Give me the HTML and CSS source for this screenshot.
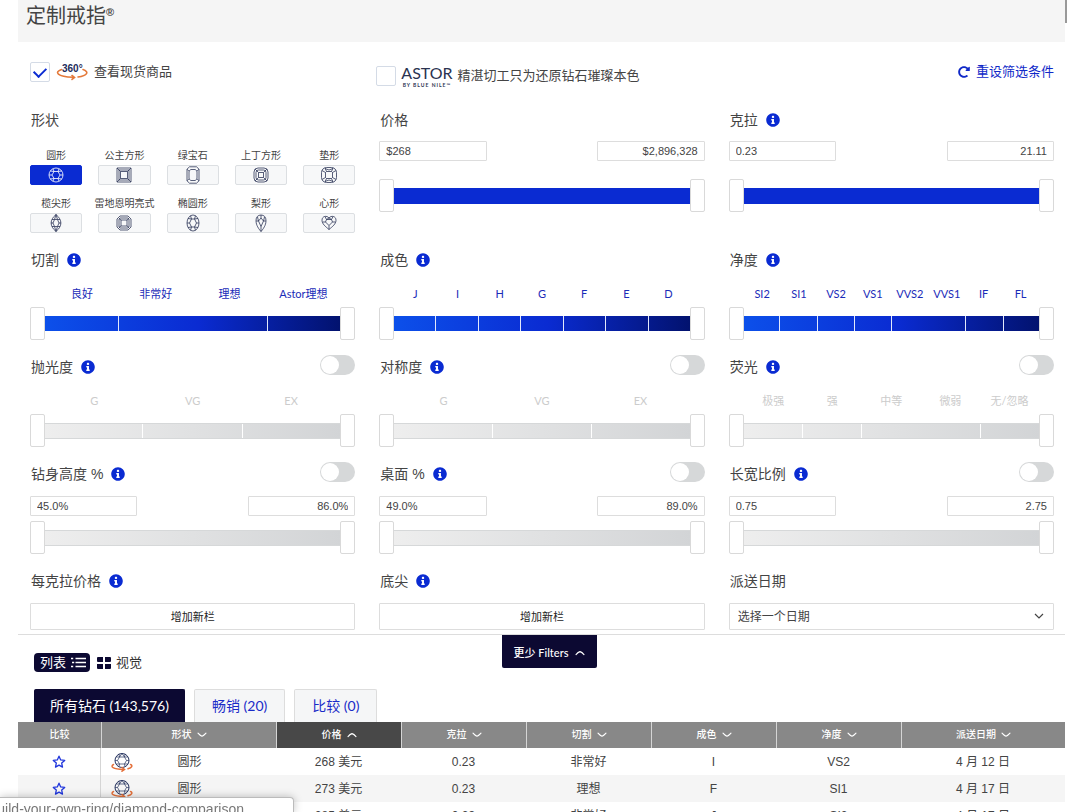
FILE: index.html
```html
<!DOCTYPE html>
<html lang="zh-CN">
<head>
<meta charset="utf-8">
<meta name="viewport" content="width=device-width, initial-scale=1">
<title>定制戒指</title>
<link rel="stylesheet" href="styles.css">
</head>
<body>
<svg class="sprite" aria-hidden="true">
  <symbol id="info" viewBox="0 0 512 512"><path fill="currentColor" d="M256 8C119.043 8 8 119.083 8 256c0 136.997 111.043 248 248 248s248-111.003 248-248C504 119.083 392.957 8 256 8zm0 90c25 0 44 19 44 44s-19 44-44 44-44-19-44-44 19-44 44-44zm64 290c0 6.627-5.373 12-12 12h-104c-6.627 0-12-5.373-12-12v-26c0-6.627 5.373-12 12-12h16v-78h-16c-6.627 0-12-5.373-12-12v-26c0-6.627 5.373-12 12-12h76c6.627 0 12 5.373 12 12v116h16c6.627 0 12 5.373 12 12v26z"/></symbol>
  <symbol id="redo" viewBox="0 0 512 512"><path fill="currentColor" d="M256.455 8c66.269.119 126.437 26.233 170.859 68.685l35.715-35.715C478.149 25.851 504 36.559 504 57.941V192c0 13.255-10.745 24-24 24H345.941c-21.382 0-32.09-25.851-16.971-40.971l41.75-41.75c-30.864-28.899-70.801-44.907-113.23-45.273-92.398-.798-170.283 73.977-169.484 169.442C88.764 348.009 162.184 424 256 424c41.127 0 79.997-14.678 110.629-41.556 4.743-4.161 11.906-3.908 16.368.553l39.662 39.662c4.872 4.872 4.631 12.815-.482 17.433C378.202 479.813 319.926 504 256 504 119.034 504 8.001 392.967 8 256.002 7.999 119.193 119.646 7.755 256.455 8z"/></symbol>
  <symbol id="down" viewBox="0 0 10 6"><path fill="none" stroke="currentColor" stroke-width="1.1" stroke-linecap="round" d="M1 1.2Q3 3.6 5 4.2Q7 3.6 9 1.2"/></symbol>
  <symbol id="up" viewBox="0 0 10 6"><path fill="none" stroke="currentColor" stroke-width="1.1" stroke-linecap="round" d="M1 4.6Q3 2.2 5 1.6Q7 2.2 9 4.6"/></symbol>
  <symbol id="star" viewBox="0 0 14 14"><path fill="none" stroke="currentColor" stroke-width="1.3" stroke-linejoin="round" d="M7 1.2l1.7 3.7 4 .5-3 2.7.8 4L7 10.1l-3.500 2 .8-4-3-2.700 4-.5z"/></symbol>
  <symbol id="spin" viewBox="0 0 22 20">
    <g fill="none" stroke="#26335f" stroke-width="1"><circle cx="11" cy="8.500" r="7"/><path stroke-width=".7" d="M8.500 5h5l2 3.500-2 3.500h-5l-2-3.500zM8.500 5l-.5-3.200M13.500 5l.5-3.200M15.500 8.500h2.500M6.500 8.500H4M8.500 12l-.5 3M13.500 12l.5 3M8.500 5L5 5M13.500 5h3.500M8.500 12H5M13.500 12h3.500M8.500 5L11 1.500 13.500 5"/></g>
    <g fill="none" stroke="#e4703a" stroke-width="1.500" stroke-linecap="round"><path d="M2.500 12.500C-1 14.500 1.500 17.400 12.500 17.400M19.500 12.500c2.500 1 1.500 3-2.500 4.200"/><path d="M11 15.500l2.500 1.900-2.500 1.800"/></g>
  </symbol>
</svg>

<header class="masthead"><h1>定制戒指<sup>®</sup></h1></header>
<span class="scroll-thumb"></span>

<main>
  <form class="filters">
    <div class="options">
      <label class="option">
        <input class="tick" type="checkbox" checked>
        <svg class="spin-logo" width="32" height="18" viewBox="0 0 32 18" aria-hidden="true">
          <g fill="none" stroke="#e4793a" stroke-width="1.600" stroke-linecap="round"><path d="M5.500 6.500C-2 9 1 13.500 17 14.300M27 6.500c6.500 2.200 4.500 6.200-5 7.500"/><path d="M16 12.500l2.500 1.900-2.500 2"/></g>
          <text class="spin-text" x="6" y="9">360°</text>
        </svg>
        <span>查看现货商品</span>
      </label>
      <label class="option option-astor">
        <input class="tick" type="checkbox">
        <span class="astor"><b>ASTOR</b><small>BY BLUE NILE™</small></span>
        <span>精湛切工只为还原钻石璀璨本色</span>
      </label>
      <button class="reset" type="button"><svg width="12" height="12"><use href="#redo"/></svg>重设筛选条件</button>
    </div>

    <div class="grid">
      <section class="filter">
        <h2>形状</h2>
        <div class="shapes">
          <button type="button" class="shape active" aria-pressed="true"><span>圆形</span><i><svg viewBox="0 0 18 18"><circle cx="9" cy="9" r="7"/><path d="M7 5.500h4L13 9l-2 3.500H7L5 9zM7 5.500L6 2.700M11 5.500l1-2.800M13 9h3M5 9H2M7 12.500l-1 2.800M11 12.500l1 2.800M7 5.500L3.200 5M11 5.500l3.800-.5M7 12.500L3.200 13M11 12.500l3.800.5"/></svg></i></button>
          <button type="button" class="shape"><span>公主方形</span><i><svg viewBox="0 0 18 18"><path d="M2 2h14v14H2zM5.500 5.500h7v7h-7zM2 2l3.500 3.500M16 2l-3.500 3.500M2 16l3.500-3.500M16 16l-3.500-3.500M4 4h10v10H4z"/></svg></i></button>
          <button type="button" class="shape"><span>绿宝石</span><i><svg viewBox="0 0 18 18"><path d="M5.500.8h7L15 3.200v11.600l-2.500 2.400h-7L3 14.800V3.200zM6.800 3.500h4.400L13 5.200v7.600l-1.800 1.700H6.800L5 12.800V5.200zM3 3.200l2 2M15 3.200l-2 2M3 14.800l2-2M15 14.800l-2-2"/></svg></i></button>
          <button type="button" class="shape"><span>上丁方形</span><i><svg viewBox="0 0 18 18"><rect x="2" y="2" width="14" height="14" rx="4"/><rect x="4" y="4" width="10" height="10" rx="2.500"/><path d="M6.500 6.500h5v5h-5zM3 3l3.500 3.500M15 3l-3.500 3.500M3 15l3.500-3.500M15 15l-3.500-3.500"/></svg></i></button>
          <button type="button" class="shape"><span>垫形</span><i><svg viewBox="0 0 18 18"><rect x="1.500" y="1.500" width="15" height="15" rx="5"/><path d="M6.500 5.500h5l1 1v5l-1 1h-5l-1-1v-5zM6.500 5.500L5 2M11.500 5.500L13 2M12.500 6.500L16 4.500M12.500 11.500l3.500 2M11.500 12.500l1.500 3.500M6.500 12.500L5 16M5.500 11.500L2 13.500M5.500 6.500L2 4.500M5 2.500Q9 5.500 13 2.500M5 15.500Q9 12.500 13 15.500"/></svg></i></button>
          <button type="button" class="shape"><span>榄尖形</span><i><svg viewBox="0 0 18 18"><path d="M9 .5C15.500 6 15.500 12 9 17.500 2.500 12 2.500 6 9 .5zM7.500 5.500h3L12 9l-1.500 3.500h-3L6 9zM9 .5L7.500 5.500M9 .5l1.500 5M7.500 12.500l1.500 5 1.500-5M12 9h2M6 9H4M7.500 5.500L5 5.500M10.500 5.500h2.500M7.500 12.500H5M10.500 12.500h2.500"/></svg></i></button>
          <button type="button" class="shape"><span>雷地恩明亮式</span><i><svg viewBox="0 0 18 18"><path d="M5 2h8l3 3v8l-3 3H5l-3-3V5zM5 4h8l1 1v8l-1 1H5l-1-1V5zM6 6h6v6H6zM4 4.500L6 6M14 4.500L12 6M4 13.500L6 12M14 13.500L12 12"/></svg></i></button>
          <button type="button" class="shape"><span>椭圆形</span><i><svg viewBox="0 0 18 18"><ellipse cx="9" cy="9" rx="6" ry="8"/><path d="M7.500 5h3L12.500 9l-2 4h-3l-2-4zM7.500 5L6.500 1.800M10.500 5l1-3.200M12.500 9H15M5.500 9H3M7.500 13l-1 3.200M10.500 13l1 3.200M7.500 5L4 4.500M10.500 5l3.500-.5M7.500 13L4 13.500M10.500 13l3.500.5"/></svg></i></button>
          <button type="button" class="shape"><span>梨形</span><i><svg viewBox="0 0 18 18"><path d="M9 17.500C5 13 4 9.500 4 6.500 4 3 6 1 9 1s5 2 5 5.500c0 3-1 6.500-5 11zM9 4l2.500 3L9 12.500 6.500 7zM9 12.500v5M9 1v3M6.500 7H4M11.500 7H14M6.500 7l-1-4M11.500 7l1-4"/></svg></i></button>
          <button type="button" class="shape"><span>心形</span><i><svg viewBox="0 0 18 18"><path d="M9 15.500C5.500 12.500 2 10 2 6.200 2 2 6.800 1.200 9 4c2.200-2.800 7-2 7 2.200 0 3.800-3.500 6.300-7 9.300zM6.500 5.500h5l1 2.500L9 11.500 5.500 8zM6.500 5.500L5 2.600M6.500 5.500L9 4l2.500 1.500L13 2.600M5.500 8H2.500M12.500 8h3M9 11.500v4"/></svg></i></button>
        </div>
      </section>

      <section class="filter">
        <h2>价格</h2>
        <div class="pair pair-tall"><input type="text" aria-label="最低价格" value="$268"><input type="text" aria-label="最高价格" value="$2,896,328"></div>
        <div class="slider"><div class="track solid"></div><input type="range" aria-label="最低价格" value="0"><input type="range" aria-label="最高价格" value="100"></div>
      </section>

      <section class="filter">
        <h2>克拉<svg class="info"><use href="#info"/></svg></h2>
        <div class="pair pair-tall"><input type="text" aria-label="最小克拉" value="0.23"><input type="text" aria-label="最大克拉" value="21.11"></div>
        <div class="slider"><div class="track solid"></div><input type="range" aria-label="最小克拉" value="0"><input type="range" aria-label="最大克拉" value="100"></div>
      </section>

      <section class="filter">
        <h2>切割<svg class="info"><use href="#info"/></svg></h2>
        <div class="scale"><span>良好</span><span>非常好</span><span>理想</span><span>Astor理想</span></div>
        <div class="slider"><div class="track blue"><i></i><i class="double"></i><i></i></div><input type="range" aria-label="最低切割" value="0"><input type="range" aria-label="最高切割" value="100"></div>
      </section>

      <section class="filter">
        <h2>成色<svg class="info"><use href="#info"/></svg></h2>
        <div class="scale"><span>J</span><span>I</span><span>H</span><span>G</span><span>F</span><span>E</span><span>D</span></div>
        <div class="slider"><div class="track blue"><i></i><i></i><i></i><i></i><i></i><i></i><i></i></div><input type="range" aria-label="最低成色" value="0"><input type="range" aria-label="最高成色" value="100"></div>
      </section>

      <section class="filter">
        <h2>净度<svg class="info"><use href="#info"/></svg></h2>
        <div class="scale"><span>SI2</span><span>SI1</span><span>VS2</span><span>VS1</span><span>VVS2</span><span>VVS1</span><span>IF</span><span>FL</span></div>
        <div class="slider"><div class="track blue"><i></i><i></i><i></i><i></i><i class="double"></i><i></i><i></i></div><input type="range" aria-label="最低净度" value="0"><input type="range" aria-label="最高净度" value="100"></div>
      </section>

      <section class="filter">
        <h2>抛光度<svg class="info"><use href="#info"/></svg><input class="switch" type="checkbox" aria-label="启用抛光度"></h2>
        <div class="scale muted"><span>G</span><span>VG</span><span>EX</span></div>
        <div class="slider"><div class="track grey"><i></i><i></i><i></i></div><input type="range" aria-label="最低抛光度" value="0"><input type="range" aria-label="最高抛光度" value="100"></div>
      </section>

      <section class="filter">
        <h2>对称度<svg class="info"><use href="#info"/></svg><input class="switch" type="checkbox" aria-label="启用对称度"></h2>
        <div class="scale muted"><span>G</span><span>VG</span><span>EX</span></div>
        <div class="slider"><div class="track grey"><i></i><i></i><i></i></div><input type="range" aria-label="最低对称度" value="0"><input type="range" aria-label="最高对称度" value="100"></div>
      </section>

      <section class="filter">
        <h2>荧光<svg class="info"><use href="#info"/></svg><input class="switch" type="checkbox" aria-label="启用荧光"></h2>
        <div class="scale muted"><span>极强</span><span>强</span><span>中等</span><span>微弱</span><span>无/忽略</span></div>
        <div class="slider"><div class="track grey"><i></i><i></i><i class="double"></i><i></i></div><input type="range" aria-label="最低荧光" value="0"><input type="range" aria-label="最高荧光" value="100"></div>
      </section>

      <section class="filter">
        <h2>钻身高度 %<svg class="info"><use href="#info"/></svg><input class="switch" type="checkbox" aria-label="启用钻身高度"></h2>
        <div class="pair"><input type="text" aria-label="最小钻身高度" value="45.0%"><input type="text" aria-label="最大钻身高度" value="86.0%"></div>
        <div class="slider"><div class="track grey"></div><input type="range" aria-label="最小钻身高度" value="0"><input type="range" aria-label="最大钻身高度" value="100"></div>
      </section>

      <section class="filter">
        <h2>桌面 %<svg class="info"><use href="#info"/></svg><input class="switch" type="checkbox" aria-label="启用桌面"></h2>
        <div class="pair"><input type="text" aria-label="最小桌面" value="49.0%"><input type="text" aria-label="最大桌面" value="89.0%"></div>
        <div class="slider"><div class="track grey"></div><input type="range" aria-label="最小桌面" value="0"><input type="range" aria-label="最大桌面" value="100"></div>
      </section>

      <section class="filter">
        <h2>长宽比例<svg class="info"><use href="#info"/></svg><input class="switch" type="checkbox" aria-label="启用长宽比例"></h2>
        <div class="pair"><input type="text" aria-label="最小长宽比例" value="0.75"><input type="text" aria-label="最大长宽比例" value="2.75"></div>
        <div class="slider"><div class="track grey"></div><input type="range" aria-label="最小长宽比例" value="0"><input type="range" aria-label="最大长宽比例" value="100"></div>
      </section>

      <section class="filter">
        <h2>每克拉价格<svg class="info"><use href="#info"/></svg></h2>
        <button class="field add" type="button">增加新栏</button>
      </section>

      <section class="filter">
        <h2>底尖<svg class="info"><use href="#info"/></svg></h2>
        <button class="field add" type="button">增加新栏</button>
      </section>

      <section class="filter">
        <h2><label for="delivery">派送日期</label></h2>
        <div class="field select">
          <select id="delivery"><option>选择一个日期</option></select>
          <svg width="10" height="10" viewBox="0 0 10 10" aria-hidden="true"><path fill="none" stroke="#444" stroke-width="1.200" d="M1 2l4 4 4-4"/></svg>
        </div>
      </section>
    </div>
  </form>

  <div class="toolbar">
    <div class="views">
      <button class="view active" type="button">列表<svg width="15" height="13" viewBox="0 0 15 13" aria-hidden="true"><path stroke="currentColor" stroke-width="1.600" d="M4.500 2.500H15M4.500 6.500H15M4.500 10.500H15M0 2.500h2.200M1 6.500h2.200M0 10.500h2.200"/></svg></button>
      <button class="view" type="button"><svg width="14" height="12" viewBox="0 0 14 12" aria-hidden="true"><path fill="#0c0932" d="M1 0h5v5H1a1 1 0 0 1-1-1V1a1 1 0 0 1 1-1zM8 0h5a1 1 0 0 1 1 1v3a1 1 0 0 1-1 1H8zM0 7h6v5H1a1 1 0 0 1-1-1zM8 7h6v4a1 1 0 0 1-1 1H8z"/></svg>视觉</button>
    </div>
    <button class="less" type="button">更少 Filters<svg width="10" height="6"><use href="#up"/></svg></button>
  </div>

  <nav class="tabs">
    <button class="tab active" type="button">所有钻石 (143,576)</button>
    <button class="tab" type="button">畅销 (20)</button>
    <button class="tab" type="button">比较 (0)</button>
  </nav>

  <table class="results">
    <colgroup><col class="c-compare"><col class="c-shape"><col class="c-std"><col class="c-std"><col class="c-std"><col class="c-std"><col class="c-std"><col></colgroup>
    <thead>
      <tr>
        <th>比较</th>
        <th><button type="button">形状<svg width="10" height="6"><use href="#down"/></svg></button></th>
        <th class="sorted"><button type="button">价格<svg width="10" height="6"><use href="#up"/></svg></button></th>
        <th><button type="button">克拉<svg width="10" height="6"><use href="#down"/></svg></button></th>
        <th><button type="button">切割<svg width="10" height="6"><use href="#down"/></svg></button></th>
        <th><button type="button">成色<svg width="10" height="6"><use href="#down"/></svg></button></th>
        <th><button type="button">净度<svg width="10" height="6"><use href="#down"/></svg></button></th>
        <th><button type="button">派送日期<svg width="10" height="6"><use href="#down"/></svg></button></th>
      </tr>
    </thead>
    <tbody>
      <tr><td><button class="star" type="button" aria-label="比较"><svg width="14" height="14"><use href="#star"/></svg></button></td><td><div class="stone"><svg width="22" height="20"><use href="#spin"/></svg><span>圆形</span></div></td><td>268 美元</td><td>0.23</td><td>非常好</td><td>I</td><td>VS2</td><td>4 月 12 日</td></tr>
      <tr><td><button class="star" type="button" aria-label="比较"><svg width="14" height="14"><use href="#star"/></svg></button></td><td><div class="stone"><svg width="22" height="20"><use href="#spin"/></svg><span>圆形</span></div></td><td>273 美元</td><td>0.23</td><td>理想</td><td>F</td><td>SI1</td><td>4 月 17 日</td></tr>
      <tr><td></td><td></td><td>285 美元</td><td>0.23</td><td>非常好</td><td>J</td><td>SI2</td><td>4 月 17 日</td></tr>
    </tbody>
  </table>
</main>

<div class="status"><div><span>build-your-own-ring/diamond-comparison</span></div></div>
</body>
</html>
```
FILE: styles.css
```css
* { box-sizing: border-box; }

body {
  margin: 0;
  padding: 0 15px 0 18px;
  height: 100vh;
  overflow: hidden;
  background: #fff;
  color: #444;
  font: 13px/20px "Liberation Sans", "Noto Sans CJK SC", sans-serif;
}

button, input, select { font: inherit; color: inherit; margin: 0; }
button { padding: 0; border: 0; background: none; cursor: pointer; white-space: nowrap; }
i { font-style: normal; }
svg { flex: none; }
.sprite { position: absolute; width: 0; height: 0; }

.masthead { background: #f5f5f5; padding: 2px 8px 12px; }
.masthead h1 { margin: 0; display: flex; align-items: flex-start; font-size: 20px; line-height: 28px; font-weight: 400; }
.masthead sup { font-size: 11px; line-height: 20px; font-weight: 700; }
.scroll-thumb { position: absolute; top: 0; right: 13px; width: 2px; height: 23px; background: #999; }

/* Filter panel */
.filters { padding: 20px 11px 4px 12px; border-bottom: 1px solid #ddd; }
.options { display: grid; grid-template-columns: repeat(3, 1fr); column-gap: 24px; align-items: start; margin-bottom: 22px; }
.option { display: flex; align-items: center; gap: 6px; white-space: nowrap; }
.option-astor { padding-top: 2px; margin-left: -3px; gap: 5px; }
.tick {
  appearance: none;
  flex: none;
  width: 20px;
  height: 20px;
  border: 1px solid #d4dbe6;
  border-radius: 2px;
  display: grid;
  place-items: center;
}
.tick:checked::before {
  content: "";
  width: 10px;
  height: 6px;
  margin-bottom: 3px;
  border: solid #0a2bd2;
  border-width: 0 0 2px 2px;
  rotate: -45deg;
}
.spin-text { font: bold 10px "Liberation Sans", sans-serif; fill: #1d2c5b; }
.astor { display: flex; flex-direction: column; align-items: center; color: #2a3350; font-family: Lato, sans-serif; }
.astor b { font-size: 16px; line-height: 18px; font-weight: 400; }
.astor small { font-size: 5px; line-height: 6px; font-weight: 700; letter-spacing: 1px; }
.reset { display: flex; align-items: center; gap: 6px; justify-self: end; color: #1029c8; }

.grid { display: grid; grid-template-columns: repeat(3, 1fr); gap: 17px 24px; }
.filter { min-width: 0; }
.filter h2 { display: flex; align-items: center; margin: 0; padding-left: 1px; font-size: 14px; line-height: 20px; font-weight: 400; }
.info { width: 14px; height: 14px; margin-left: 8px; color: #0a2bd2; }

.switch {
  appearance: none;
  width: 35px;
  height: 20px;
  margin: -4px 0 0 auto;
  padding: 1px;
  border-radius: 10px;
  background: #d6d8d9;
}
.switch::before { content: ""; display: block; width: 18px; height: 18px; border-radius: 50%; background: #fff; }
.switch:checked { background: #0a2bd2; }
.switch:checked::before { margin-left: auto; }

.shapes { display: grid; grid-template-columns: repeat(5, 1fr); gap: 12px 16px; padding-top: 19px; }
.shape { display: flex; flex-direction: column; align-items: center; gap: 2px; min-width: 0; font-size: 10px; line-height: 14px; }
.shape i { width: 100%; height: 20px; display: grid; place-items: center; border: 1px solid #dcdfe2; border-radius: 2px; background: #f7f8f9; }
.shape svg { width: 18px; height: 18px; fill: none; stroke: #2d3658; stroke-width: .8; }
.shape.active i { background: #0a2bd2; border-color: #0a2bd2; }
.shape.active svg { stroke: #fff; }

.pair { display: flex; justify-content: space-between; padding: 12px 0 5px; font-size: 11px; }
.pair-tall { padding: 11px 0 18px; }
.pair input { width: 33%; height: 20px; padding: 0 6px; border: 1px solid #ddd; border-radius: 1px; background: #fff; }
.pair input:last-child { text-align: right; }

.scale { display: flex; padding: 15px 15px 4px; font: 11px/18px Lato, "Noto Sans CJK SC", sans-serif; color: #1a2bb8; }
.scale span { flex: 1 1 0; min-width: 0; display: flex; justify-content: center; white-space: nowrap; }
.scale.muted { color: #ccc; }

.slider { display: grid; align-items: center; }
.slider > * { grid-area: 1 / 1; }
.track { display: flex; height: 16px; margin: 0 14px; }
.track i { flex: 1 1 0; }
.track i + i { border-left: 1px solid #e3e9fb; }
.track .double { flex-grow: 2; }
.solid { background: #0a2bd2; }
.blue { height: 15px; background: linear-gradient(90deg, #0c50ea, #0a2bd2 52%, #02126e); }
.grey { border: solid #d6d8d9; border-width: 1px 0; background: linear-gradient(90deg, #eee, #d2d4d6); }
.grey i + i { border-color: #fff; }

.slider input {
  appearance: none;
  width: 100%;
  height: 33px;
  background: none;
  pointer-events: none;
}
.slider input::-webkit-slider-thumb {
  appearance: none;
  width: 15px;
  height: 33px;
  border: 1px solid #d9d9d9;
  border-radius: 2px;
  background: #fff;
  pointer-events: auto;
}

.field { display: flex; align-items: center; width: 100%; height: 27px; margin-top: 12px; border: 1px solid #ddd; border-radius: 1px; background: #fff; }
.add { justify-content: center; font-size: 11px; color: #222; }
.select { padding-right: 9px; font-size: 12px; }
.select select { appearance: none; flex: 1; min-width: 0; padding: 0 8px; border: 0; background: none; }

/* Results */
.toolbar { display: grid; grid-template-columns: 1fr auto 1fr; align-items: start; padding-left: 16px; }
.views { display: flex; gap: 7px; padding: 18px 0 17px; }
.view { display: flex; align-items: center; gap: 5px; height: 19px; color: #333; }
.view.active { padding: 0 4px 0 6px; border-radius: 4px; background: #0c0932; color: #fff; }
.less {
  display: flex;
  align-items: center;
  gap: 7px;
  height: 33px;
  padding: 2px 12px 0;
  border-radius: 0 0 2px 2px;
  background: #0c0932;
  color: #fff;
  font: 500 11px/20px Lato, "Noto Sans CJK SC", sans-serif;
}

.tabs { display: flex; gap: 9px; padding-left: 16px; }
.tab {
  height: 33px;
  padding: 0 17px;
  border: 1px solid #ddd;
  border-bottom: 0;
  border-radius: 2px 2px 0 0;
  background: #f5f6f7;
  color: #1a2bc8;
  font: 14px/20px Lato, "Noto Sans CJK SC", sans-serif;
}
.tab.active { padding: 0 15px; background: #0c0932; border-color: #0c0932; color: #fff; }

.results { width: 100%; table-layout: fixed; border-collapse: separate; border-spacing: 0; font-size: 12px; text-align: center; }
.c-compare { width: 83px; }
.c-shape { width: 175px; }
.c-std { width: 125px; }
.results th { height: 26px; padding: 0; background: #888; color: #fff; font-size: 10px; line-height: 20px; font-weight: 500; }
.results th + th { border-left: 1px solid #d5d5d5; }
.results .sorted { background: #484848; }
.results th button { display: inline-flex; align-items: center; gap: 5px; }
.results td { height: 27px; padding: 0; line-height: 20px; }
.results td:first-child { border-right: 1px solid #d5d5d5; }
.results tr:nth-child(even) td { background: #f5f5f5; }
.star { display: inline-flex; vertical-align: middle; color: #2036dc; }
.stone { display: grid; grid-template-columns: 1fr auto 1fr; align-items: center; padding-left: 10px; }
.stone span { padding-right: 8px; }

/* Browser link preview */
.status {
  position: fixed;
  left: 0;
  bottom: 0;
  width: 294px;
  height: 15px;
  border: solid #bbb;
  border-width: 1px 1px 0 0;
  border-radius: 0 4px 0 0;
  background: #fff;
  box-shadow: 0 0 8px rgba(0, 0, 0, .25);
  overflow: hidden;
  color: #777;
}
.status div { display: flex; justify-content: flex-end; width: 244px; padding-top: 1px; font-size: 14px; line-height: 20px; white-space: nowrap; }
```
